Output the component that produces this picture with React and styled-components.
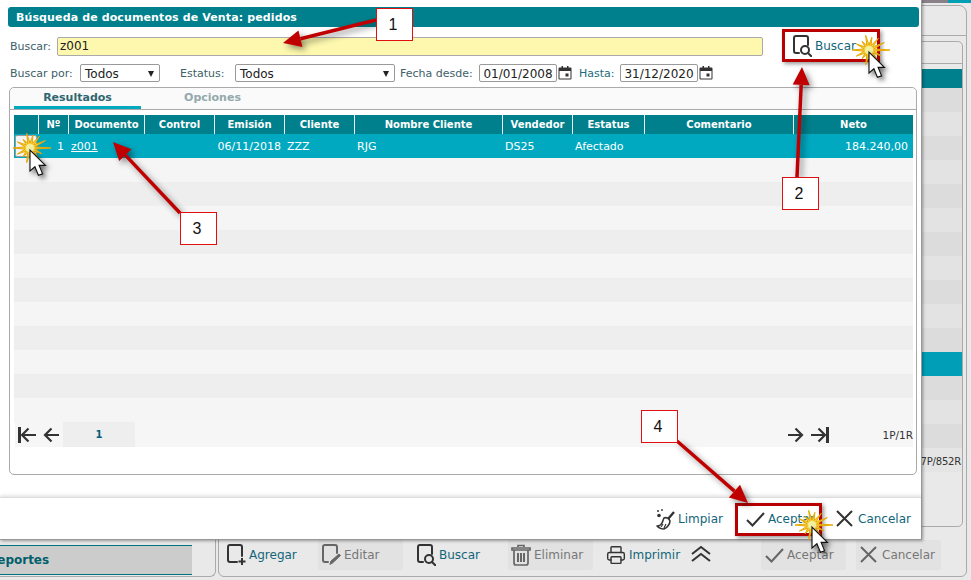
import React from 'react';
import styled, { createGlobalStyle } from 'styled-components';
import { Printer } from 'lucide-react';

const GlobalStyle = createGlobalStyle`
  html, body { margin: 0; padding: 0; overflow: hidden; background: #e9e9e9; }
  * { box-sizing: border-box; }
`;

const FONT = `"DejaVu Sans", Verdana, sans-serif`;
const COLUMNS = '24px 30px 76px 70px 70px 70px 148px 70px 72px 149px 120px';

const Page = styled.div`
  position: relative;
  width: 971px;
  height: 580px;
  overflow: hidden;
  display: grid;
  grid-template-columns: 216px 1fr;
  column-gap: 2px;
  padding: 0 4px 3px 0;
  background: #e9e9e9;
  font-family: ${FONT};
  font-size: 12px;
`;

const TopStrip = styled.div`
  position: absolute;
  top: 0;
  left: 921px;
  right: 0;
  height: 3px;
  background: linear-gradient(90deg, #8a8088 0 55%, #00a0b4 55% 100%);
`;

/* page behind the dialog */
const SidePanel = styled.aside`
  display: flex;
  align-items: flex-end;
  padding: 0 23px 1px 0;
  border-right: 1px solid #aaa;
  border-bottom: 1px solid #aaa;
  border-bottom-right-radius: 6px;
`;

const MenuEntry = styled.div`
  width: 100%;
  height: 30px;
  display: flex;
  align-items: center;
  background: #ccc;
  border-top: 1px solid #00707c;
  border-bottom: 1px solid #00707c;
  color: #005f6b;
  font-weight: bold;
  font-size: 12px;
  text-indent: -12px;
`;

const MainPanel = styled.main`
  display: flex;
  flex-direction: column;
  margin-top: 5px;
  padding: 29px 3px 0 4px;
  border: 1px solid #aaa;
  border-radius: 6px;
  border-top-right-radius: 8px;
  position: relative;
  &::before {
    content: "";
    position: absolute;
    top: 29px;
    left: 0;
    right: 0;
    border-top: 1px solid #aaa;
  }
`;

const GridPanel = styled.section`
  height: 486px;
  margin-top: 6px;
  border: 1px solid #aaa;
  border-radius: 5px;
  padding-top: 21px;
  display: flex;
  flex-direction: column;
`;

const GridHead = styled.div`
  height: 6px;
  border-top: 1px solid #aaa;
`;

const GridTitle = styled.div`
  height: 19px;
  background: #007f8c;
`;

const GridRow = styled.div`
  height: 24px;
  background: ${(p) => (p.$selected ? '#009fb7' : p.$odd ? '#dcdcdc' : '#e3e3e3')};
`;

const GridFooter = styled.div`
  height: 24px;
  display: flex;
  align-items: center;
  justify-content: flex-end;
  padding: 2px 1px 0 0;
  background: #e5e5e5;
  font-size: 10px;
  letter-spacing: -0.2px;
  color: #333;
`;

const Toolbar = styled.div`
  display: flex;
  align-items: flex-start;
  gap: 10px;
  margin-top: 13px;
`;

const ToolButton = styled.div`
  width: 85px;
  height: 30px;
  flex: none;
  display: flex;
  align-items: center;
  padding-left: 3px;
  gap: 3px;
  border-radius: 2px;
  font-size: 12px;
  color: ${(p) => (p.$disabled ? '#777' : '#12667a')};
  background: ${(p) => (p.$disabled ? '#e2e2e2' : 'transparent')};
  svg { flex: none; color: ${(p) => (p.$disabled ? '#666' : '#333')}; }
`;

const Chevrons = styled.div`
  flex: none;
  margin: 5px 0 0 -7px;
  svg { display: block; }
`;

const Spacer = styled.div`
  width: ${(p) => p.$width}px;
  flex: none;
`;

/* dialog */
const Dialog = styled.div`
  position: absolute;
  top: 0;
  left: 0;
  width: 922px;
  height: 540px;
  display: flex;
  flex-direction: column;
  background: #fff;
  border-right: 1px solid #999;
  border-bottom: 1px solid #999;
  box-shadow: 1px 1px 3px rgba(0, 0, 0, 0.35);
`;

const DialogBody = styled.div`
  flex: 1;
  padding: 7px 2px 0 8px;
`;

const TitleBar = styled.h1`
  margin: 0;
  height: 20px;
  padding-left: 8px;
  display: flex;
  align-items: center;
  background: #00808c;
  border-radius: 3px;
  color: #fff;
  font-size: 11px;
  font-weight: bold;
  letter-spacing: 0.12px;
`;

const SearchRow = styled.div`
  display: flex;
  align-items: center;
  height: 30px;
  margin-top: 4px;
  padding-left: 2px;
`;

const FilterRow = styled.div`
  display: flex;
  align-items: center;
  height: 18px;
  margin-top: 3px;
  padding-left: 2px;
`;

const Label = styled.label`
  flex: none;
  width: ${(p) => (p.$width ? `${p.$width}px` : 'auto')};
  color: ${(p) => p.$color || '#3d6068'};
  font-size: 11px;
`;

const SearchInput = styled.div`
  width: 706px;
  height: 19px;
  display: flex;
  align-items: center;
  padding-left: 2px;
  background: #fdf8ae;
  border: 1px solid #aaa;
  border-radius: 2px;
  font-size: 12px;
  color: #222;
`;

const Select = styled.div`
  width: ${(p) => p.$width}px;
  height: 18px;
  flex: none;
  display: flex;
  align-items: center;
  justify-content: space-between;
  padding: 1px 5px 0 4px;
  background: #fff;
  border: 1px solid #999;
  border-radius: 2px;
  font-size: 12px;
  color: #222;
  &::after {
    content: "";
    border-left: 3px solid transparent;
    border-right: 3px solid transparent;
    border-top: 6px solid #222;
  }
`;

const DateInput = styled.div`
  width: 78px;
  height: 18px;
  flex: none;
  display: flex;
  align-items: center;
  justify-content: center;
  padding-top: 1px;
  border: 1px solid #999;
  border-radius: 2px;
  font-size: 12px;
  color: #222;
`;

const TabPanel = styled.section`
  height: 388px;
  margin: 5px 2px 0 1px;
  border: 1px solid #aaa;
  border-radius: 5px;
  background: #fff;
`;

const TabBar = styled.div`
  height: 22px;
  display: flex;
  padding-left: 4px;
  border-bottom: 1px solid #aaa;
  background: #fafafa;
  border-radius: 5px 5px 0 0;
`;

const Tab = styled.div`
  width: 127px;
  height: 21px;
  margin-right: 8px;
  padding-top: 1px;
  display: flex;
  align-items: center;
  justify-content: center;
  font-size: 11px;
  font-weight: bold;
  color: ${(p) => (p.$active ? '#2f6670' : '#93a9ad')};
  border-bottom: 3px solid ${(p) => (p.$active ? '#00a8c0' : 'transparent')};
`;

const Table = styled.div`
  margin: 5px 3px 0 4px;
`;

const HeaderRow = styled.div`
  display: grid;
  grid-template-columns: ${COLUMNS};
  height: 19px;
  background: #00808c;
`;

const HeaderCell = styled.div`
  display: flex;
  align-items: center;
  justify-content: center;
  color: #fff;
  font-size: 10px;
  font-weight: bold;
  border-left: ${(p) => (p.$first ? 'none' : '1px solid #e8f4f5')};
`;

const Row = styled.div`
  display: grid;
  grid-template-columns: ${COLUMNS};
  height: 24px;
  background: ${(p) => (p.$selected ? '#00a8c0' : p.$striped ? '#eeeeee' : '#f5f5f5')};
`;

const Cell = styled.div`
  display: flex;
  align-items: center;
  padding: 0 ${(p) => p.$padRight ?? 3}px 0 3px;
  color: #fff;
  font-size: 11px;
  justify-content: ${(p) => (p.$right ? 'flex-end' : 'flex-start')};
`;

const DocLink = styled.span`
  text-decoration: underline;
`;

const RowPick = styled.div`
  width: 22px;
  height: 22px;
  margin: 1px;
  background: #f3f3f3;
  border: 1px solid #999;
  border-radius: 2px;
`;

const Pager = styled.div`
  height: 25px;
  margin-left: 1px;
  display: flex;
  align-items: center;
  background: #f6f6f6;
  font-size: 10.500px;
  color: #333;
  svg { flex: none; color: #333; }
`;

const PagerIcons = styled.div`
  display: flex;
  align-items: center;
  gap: ${(p) => p.$gap}px;
  width: ${(p) => p.$width}px;
  padding-left: ${(p) => p.$pad || 0}px;
`;

const PageNumber = styled.div`
  width: 72px;
  height: 25px;
  display: flex;
  align-items: center;
  justify-content: center;
  background: #eee;
  color: #00607a;
  font-weight: bold;
  font-size: 10px;
`;

const PagerFill = styled.div`
  flex: 1;
`;

const DialogFooter = styled.footer`
  height: 42px;
  display: flex;
  align-items: center;
  justify-content: flex-end;
  gap: 5px;
  padding-right: 4px;
  border-top: 1px solid #ddd;
  box-shadow: 0 -2px 3px rgba(0, 0, 0, 0.1);
`;

/* tutorial marks drawn over the screenshot */
const Overlay = styled.svg`
  position: absolute;
  top: 0;
  left: 0;
  pointer-events: none;
`;

const Callout = styled.div`
  position: absolute;
  left: ${(p) => p.$x}px;
  top: ${(p) => p.$y}px;
  width: 37px;
  height: 33px;
  padding-right: 3px;
  display: flex;
  align-items: center;
  justify-content: center;
  background: #fff;
  border: 1px solid #e01010;
  font-family: "Liberation Sans", Arial, sans-serif;
  font-size: 16px;
  color: #111;
`;

const Highlight = styled.div`
  position: absolute;
  left: ${(p) => p.$x}px;
  top: ${(p) => p.$y}px;
  width: ${(p) => p.$w}px;
  height: ${(p) => p.$h}px;
  border: 3px solid #b80000;
  box-shadow: 2px 2px 4px rgba(0, 0, 0, 0.4);
`;

const DocFrame = ({ children, color = '#333' }) => (
  <svg width="20" height="22" viewBox="0 0 20 22" fill="none" stroke={color} strokeWidth="2" strokeLinecap="round">
    {children}
  </svg>
);

const SearchDocIcon = () => (
  <DocFrame>
    <path d="M16 10V3a2 2 0 0 0-2-2H4a2 2 0 0 0-2 2v13a2 2 0 0 0 2 2h3" />
    <circle cx="13" cy="15" r="4" />
    <path d="M16 18l3.500 3.500" />
  </DocFrame>
);

const AddDocIcon = () => (
  <DocFrame>
    <path d="M16 12V3a2 2 0 0 0-2-2H4a2 2 0 0 0-2 2v13a2 2 0 0 0 2 2h7" />
    <path d="M16 14v7M12.500 17.500h7" strokeLinecap="butt" />
  </DocFrame>
);

const EditDocIcon = () => (
  <DocFrame color="#666">
    <path d="M16 9V3a2 2 0 0 0-2-2H4a2 2 0 0 0-2 2v13a2 2 0 0 0 2 2h3" />
    <path d="M9 20l1-3 8-7 1.500 1.500-8 7.500z" fill="#666" strokeWidth="1" />
  </DocFrame>
);

const BroomIcon = () => (
  <svg width="20" height="22" viewBox="0 0 20 22" fill="none" stroke="#333" strokeWidth="1.600" strokeLinejoin="round">
    <path d="M19 4l-6 7" strokeWidth="2.400" />
    <path d="M9 10c2-1 5 0 6 3 0 3-3 7-6 8-2 0-5-1-7-3 2 0 4-1 5-3 1-2 1-3 2-5z" fill="#fff" />
    <path d="M8 16l-2 3M11 16l-2 4" strokeWidth="1.200" />
    <circle cx="3" cy="3" r="1" fill="#333" stroke="none" />
    <circle cx="7" cy="2" r="0.900" fill="#333" stroke="none" />
    <circle cx="4" cy="7.500" r="1.800" fill="#333" stroke="none" />
  </svg>
);

const CheckIcon = () => (
  <svg width="20" height="20" viewBox="0 0 20 20" fill="none" stroke="currentColor" strokeWidth="2">
    <path d="M2 11l5.500 5.500L19 4" />
  </svg>
);

const CloseIcon = () => (
  <svg width="20" height="20" viewBox="0 0 20 20" fill="none" stroke="currentColor" strokeWidth="2">
    <path d="M2 2l15 15M17 2L2 17" />
  </svg>
);

const TrashIcon = () => (
  <svg width="20" height="22" viewBox="0 0 20 22" fill="none" stroke="currentColor" strokeWidth="1.700">
    <path d="M7 3V1.500h6V3M1 4h18v2H1zM3 6.500V19a2 2 0 0 0 2 2h10a2 2 0 0 0 2-2V6.500" />
    <path d="M7 9v9M10 9v9M13 9v9" strokeWidth="2" />
  </svg>
);

const ChevronsIcon = () => (
  <svg width="20" height="18" viewBox="0 0 20 18" fill="none" stroke="#333" strokeWidth="2">
    <path d="M1 9l9-7 9 7M1 16l9-7 9 7" />
  </svg>
);

const PagerFirstIcon = () => (
  <svg width="20" height="20" viewBox="0 0 20 20" fill="none" stroke="#333" strokeWidth="2.200">
    <path d="M2.500 2v16" strokeWidth="3" />
    <path d="M19 10H5M11.500 3.500L5 10l6.500 6.500" />
  </svg>
);

const PagerPrevIcon = () => (
  <svg width="18" height="20" viewBox="0 0 18 20" fill="none" stroke="#333" strokeWidth="2.200">
    <path d="M17 10H3M9.500 3.500L3 10l6.500 6.500" />
  </svg>
);

const PagerNextIcon = () => (
  <svg width="18" height="20" viewBox="0 0 18 20" fill="none" stroke="#333" strokeWidth="2.200">
    <path d="M1 10h14M8.500 3.500L15 10l-6.500 6.500" />
  </svg>
);

const PagerLastIcon = () => (
  <svg width="20" height="20" viewBox="0 0 20 20" fill="none" stroke="#333" strokeWidth="2.200">
    <path d="M17.500 2v16" strokeWidth="3" />
    <path d="M1 10h14M8.500 3.500L15 10l-6.500 6.500" />
  </svg>
);

const CalendarIcon = () => (
  <svg width="14" height="14" viewBox="0 0 14 14" style={{ flex: 'none' }}>
    <path fill="#333" d="M1.500 1.500h2V0h1.500v1.500h4V0h1.500v1.500h2A1 1 0 0 1 13.500 2.500v10a1 1 0 0 1-1 1h-11a1 1 0 0 1-1-1v-10a1 1 0 0 1 1-1zm0 3.500v7.500h11V5z" />
    <rect x="7.500" y="7.500" width="3" height="3" fill="#333" />
  </svg>
);

const Arrow = ({ x1, y1, x2, y2 }) => {
  const angle = Math.atan2(y2 - y1, x2 - x1);
  const length = 18;
  const half = 8.500;
  const bx = x2 - Math.cos(angle) * length;
  const by = y2 - Math.sin(angle) * length;
  const nx = -Math.sin(angle) * half;
  const ny = Math.cos(angle) * half;
  return (
    <g>
      <line x1={x1} y1={y1} x2={bx} y2={by} stroke="#c00000" strokeWidth="3.500" />
      <polygon points={`${x2},${y2} ${bx + nx},${by + ny} ${bx - nx},${by - ny}`} fill="#c00000" />
    </g>
  );
};

const SPIKES = [21, 13, 16, 12, 15, 11, 14, 17, 14, 11, 15, 13, 15, 17];

const starPoints = (cx, cy) =>
  SPIKES.flatMap((r, i) => {
    const a = (i / SPIKES.length) * Math.PI * 2;
    const b = ((i + 0.5) / SPIKES.length) * Math.PI * 2;
    return [
      `${cx + Math.cos(a) * r},${cy + Math.sin(a) * r}`,
      `${cx + Math.cos(b) * 5},${cy + Math.sin(b) * 5}`,
    ];
  }).join(' ');

const ClickMark = ({ x, y }) => (
  <g>
    <polygon points={starPoints(x, y)} fill="#f5d040" stroke="#e8a800" strokeWidth="1" strokeLinejoin="bevel" />
    <circle cx={x} cy={y} r="4" fill="#f2efa0" />
    <g transform={`translate(${x} ${y + 2}) scale(1.400)`} style={{ filter: 'drop-shadow(2px 2px 2px rgba(0,0,0,.55))' }}>
      <polygon points="0,0 0,15 3.500,12 6,18 9,17 6.500,11 11,11" fill="#fff" stroke="#111" strokeWidth="0.800" />
    </g>
  </g>
);

const headers = ['', 'Nº', 'Documento', 'Control', 'Emisión', 'Cliente', 'Nombre Cliente', 'Vendedor', 'Estatus', 'Comentario', 'Neto'];
const emptyRows = Array.from({ length: 11 }, (_, i) => i);
const gridRows = Array.from({ length: 15 }, (_, i) => i);

const App = () => (
  <Page>
    <GlobalStyle />
    <TopStrip />

    <SidePanel>
      <MenuEntry>Reportes</MenuEntry>
    </SidePanel>

    <MainPanel>
      <GridPanel>
        <GridHead />
        <GridTitle />
        {gridRows.map((i) => (
          <GridRow key={i} $odd={i % 2 === 0} $selected={i === 11} />
        ))}
        <GridFooter>7P/852R</GridFooter>
      </GridPanel>
      <Toolbar>
        <ToolButton><AddDocIcon />Agregar</ToolButton>
        <ToolButton $disabled><EditDocIcon />Editar</ToolButton>
        <ToolButton><SearchDocIcon />Buscar</ToolButton>
        <ToolButton $disabled><TrashIcon />Eliminar</ToolButton>
        <ToolButton><Printer size={20} strokeWidth={1.700} />Imprimir</ToolButton>
        <Chevrons><ChevronsIcon /></Chevrons>
        <Spacer $width={30} />
        <ToolButton $disabled><CheckIcon />Aceptar</ToolButton>
        <ToolButton $disabled><CloseIcon />Cancelar</ToolButton>
      </Toolbar>
    </MainPanel>

    <Dialog>
      <DialogBody>
        <TitleBar>Búsqueda de documentos de Venta: pedidos</TitleBar>

        <SearchRow>
          <Label $width={47}>Buscar:</Label>
          <SearchInput>z001</SearchInput>
          <Spacer $width={26} />
          <ToolButton><SearchDocIcon />Buscar</ToolButton>
        </SearchRow>

        <FilterRow>
          <Label $width={70}>Buscar por:</Label>
          <Select $width={80}>Todos</Select>
          <Spacer $width={20} />
          <Label $width={55}>Estatus:</Label>
          <Select $width={160}>Todos</Select>
          <Spacer $width={5} />
          <Label $width={79}>Fecha desde:</Label>
          <DateInput>01/01/2008</DateInput>
          <Spacer $width={1} />
          <CalendarIcon />
          <Spacer $width={7} />
          <Label $width={41} $color="#1d6a7a">Hasta:</Label>
          <DateInput>31/12/2020</DateInput>
          <Spacer $width={1} />
          <CalendarIcon />
        </FilterRow>

        <TabPanel>
          <TabBar>
            <Tab $active>Resultados</Tab>
            <Tab>Opciones</Tab>
          </TabBar>
          <Table>
            <HeaderRow>
              {headers.map((h, i) => (
                <HeaderCell key={i} $first={i === 0}>{h}</HeaderCell>
              ))}
            </HeaderRow>
            <Row $selected>
              <RowPick />
              <Cell $right $padRight={4}>1</Cell>
              <Cell><DocLink>z001</DocLink></Cell>
              <Cell />
              <Cell $right>06/11/2018</Cell>
              <Cell>ZZZ</Cell>
              <Cell>RJG</Cell>
              <Cell>DS25</Cell>
              <Cell>Afectado</Cell>
              <Cell />
              <Cell $right $padRight={5}>184.240,00</Cell>
            </Row>
            {emptyRows.map((i) => (
              <Row key={i} $striped={i % 2 === 1} />
            ))}
            <Pager>
              <PagerIcons $width={48} $gap={5} $pad={2}>
                <PagerFirstIcon />
                <PagerPrevIcon />
              </PagerIcons>
              <PageNumber>1</PageNumber>
              <PagerFill />
              <PagerIcons $width={126} $gap={5}>
                <PagerNextIcon />
                <PagerLastIcon />
                <PagerFill />
                <span>1P/1R</span>
              </PagerIcons>
            </Pager>
          </Table>
        </TabPanel>
      </DialogBody>

      <DialogFooter>
        <ToolButton><BroomIcon />Limpiar</ToolButton>
        <ToolButton><CheckIcon />Aceptar</ToolButton>
        <ToolButton><CloseIcon />Cancelar</ToolButton>
      </DialogFooter>
    </Dialog>

    <Highlight $x={782} $y={29} $w={98} $h={33} />
    <Highlight $x={735} $y={503} $w={87} $h={33} />

    <Overlay width="971" height="580" viewBox="0 0 971 580">
      <g style={{ filter: 'drop-shadow(3px 3px 3px rgba(0,0,0,.45))' }}>
        <Arrow x1={376} y1={20} x2={283} y2={43} />
        <Arrow x1={797} y1={177} x2={802} y2={67} />
        <Arrow x1={180} y1={213} x2={113} y2={142} />
        <Arrow x1={677} y1={441} x2={748} y2={503} />
      </g>
      <ClickMark x={30} y={148} />
      <ClickMark x={869} y={50} />
      <ClickMark x={812} y={525} />
    </Overlay>

    <Callout $x={376} $y={8}>1</Callout>
    <Callout $x={782} $y={177}>2</Callout>
    <Callout $x={180} $y={212}>3</Callout>
    <Callout $x={641} $y={410}>4</Callout>
  </Page>
);

export default App;
